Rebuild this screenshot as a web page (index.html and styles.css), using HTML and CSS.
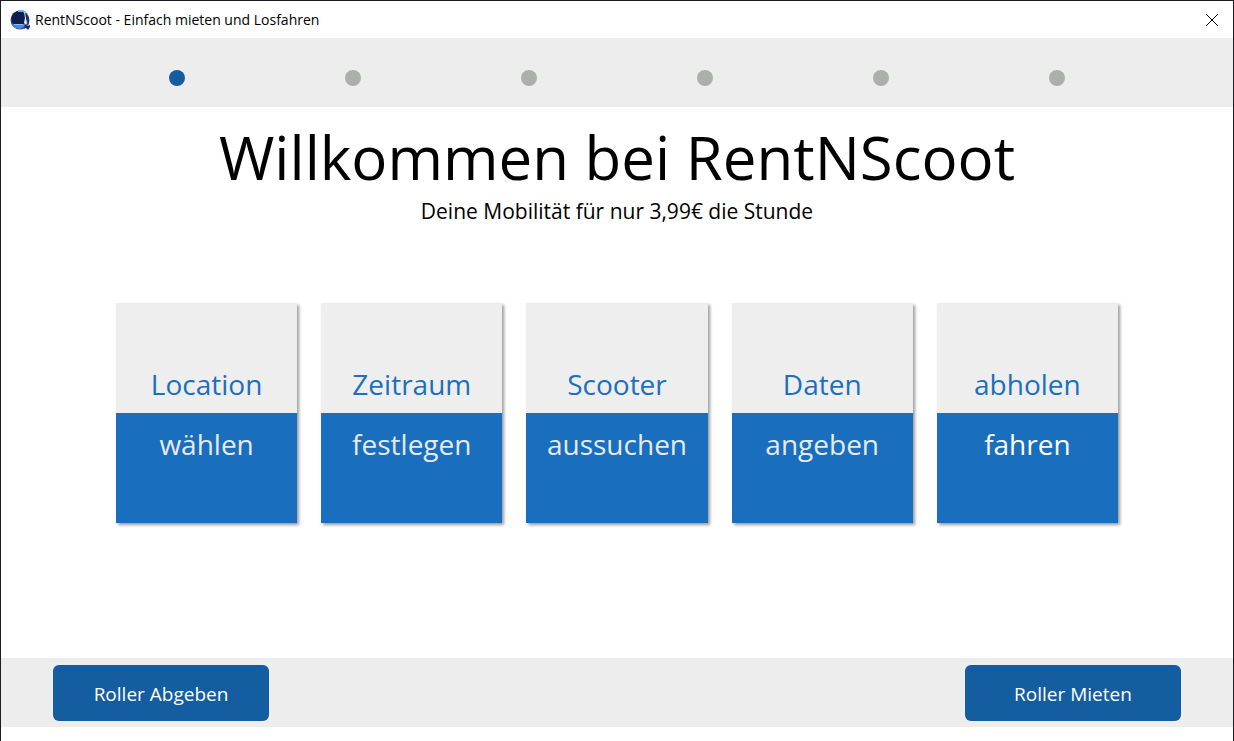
FILE: index.html
```html
<!DOCTYPE html>
<html lang="de">
<head>
<meta charset="utf-8">
<title>RentNScoot</title>
<link rel="stylesheet" href="styles.css">
</head>
<body>
<div class="window">
  <header class="titlebar">
    <svg class="logo" viewBox="0 0 20 20" aria-hidden="true">
      <circle cx="10" cy="10" r="9.500" fill="#274a94"/>
      <circle cx="9.500" cy="9" r="8" fill="#101c4a"/>
      <path d="M2 14h13l-1 3-4 2-5-1z" fill="#4f86e0"/>
      <path d="M4 14h9v1H5z" fill="#8cc0ff"/>
      <path d="M8 0h5l3 2-1 2-2-2H8z" fill="#6fb0fa"/>
      <path d="M14 2l1 1 1 5 1 5-1 2-2-2 1-5z" fill="#e4f0ff"/>
      <path d="M16 4l3 4v5l-1 2-1-5z" fill="#1c3272"/>
      <path d="M15 14l2 2 3-1v2l-2 3-2-2-2 1 1-3z" fill="#1c2c66"/>
    </svg>
    <span class="titlebar-text">RentNScoot - Einfach mieten und Losfahren</span>
    <button class="close" type="button" aria-label="Schließen">
      <svg class="close-icon" viewBox="0 0 12 12" aria-hidden="true"><path d="M0 0L12 12M12 0L0 12"/></svg>
    </button>
  </header>
  <ol class="steps" aria-label="Fortschritt">
    <li class="step step-active"></li>
    <li class="step"></li>
    <li class="step"></li>
    <li class="step"></li>
    <li class="step"></li>
    <li class="step"></li>
  </ol>
  <main class="content">
    <h1 class="headline">Willkommen bei RentNScoot</h1>
    <p class="subline">Deine Mobilität für nur 3,99€ die Stunde</p>
    <div class="cards">
      <section class="card"><div class="card-top">Location</div><div class="card-bottom">wählen</div></section>
      <section class="card"><div class="card-top">Zeitraum</div><div class="card-bottom">festlegen</div></section>
      <section class="card"><div class="card-top">Scooter</div><div class="card-bottom">aussuchen</div></section>
      <section class="card"><div class="card-top">Daten</div><div class="card-bottom">angeben</div></section>
      <section class="card"><div class="card-top">abholen</div><div class="card-bottom card-bright">fahren</div></section>
    </div>
  </main>
  <footer class="actions">
    <button class="action" type="button">Roller Abgeben</button>
    <button class="action" type="button">Roller Mieten</button>
  </footer>
</div>
</body>
</html>
```
FILE: styles.css
```css
* { box-sizing: border-box; }
body {
  margin: 0;
  background: #fff;
  color: #000;
  font-family: "Open Sans", "Noto Sans", sans-serif;
}
.window {
  display: flex;
  flex-direction: column;
  min-height: 100vh;
  padding-bottom: 14px;
  border: 1px solid #1c1c24;
  border-bottom: 0;
}
.titlebar {
  display: flex;
  align-items: center;
  height: 37px;
  padding-left: 9px;
}
.logo { width: 20px; height: 20px; }
.titlebar-text { margin-left: 5px; font-size: 14px; line-height: 20px; }
.close {
  display: grid;
  place-items: center;
  width: 42px;
  height: 36px;
  margin-left: auto;
  padding: 0;
  border: 0;
  background: none;
}
.close-icon { width: 12px; height: 12px; fill: none; stroke: #000; stroke-width: 1; }
.steps {
  display: flex;
  justify-content: space-around;
  margin: 0;
  padding: 32px 88px 21px;
  background: #ededed;
  list-style: none;
}
.step { width: 16px; height: 16px; border-radius: 50%; background: #adafac; }
.step-active { background: #145da0; }
.content {
  display: flex;
  flex: 1;
  flex-direction: column;
  align-items: center;
  padding-top: 12px;
}
.headline { margin: 0; font-size: 60px; font-weight: 400; line-height: 76px; }
.subline { margin: 4px 0 0; font-size: 21px; line-height: 24px; }
.cards {
  display: grid;
  grid-template-columns: repeat(5, 1fr);
  gap: 24px;
  width: 100%;
  margin-top: 80px;
  padding: 0 115px;
}
.card {
  box-shadow: 2px 2px 3px rgba(0, 0, 0, 0.4);
  font-size: 28px;
  line-height: 38px;
  text-align: center;
}
.card-top { height: 110px; padding-top: 62px; background: #eee; color: #1a6fbf; }
.card-bottom { height: 110px; padding-top: 12px; background: #196ebd; color: #e6eaee; }
.card-bright { color: #fff; }
.actions {
  display: flex;
  justify-content: space-between;
  padding: 7px 52px 6px;
  background: #ededed;
}
.action {
  width: 216px;
  height: 56px;
  padding: 2px 0 0;
  border: 0;
  border-radius: 6px;
  background: #145da0;
  color: #fff;
  font-family: inherit;
  font-size: 19px;
}
```
